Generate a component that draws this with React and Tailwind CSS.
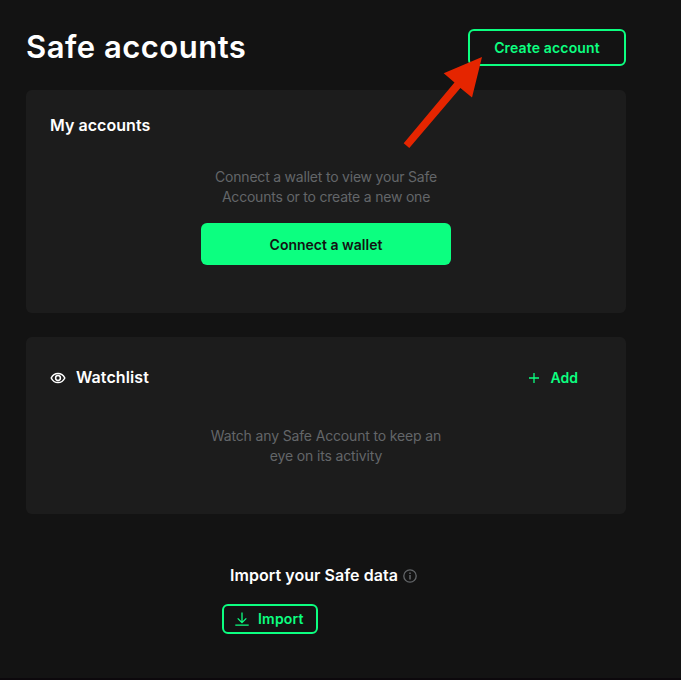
function EyeIcon() {
  return (
    <svg className="mt-[2px] h-4 w-4 shrink-0" viewBox="0 0 16 16" fill="none" stroke="#fff" strokeWidth="1.5">
      <path d="M1.2 8C2.6 5.1 5 3.4 8 3.4S13.4 5.1 14.8 8C13.4 10.9 11 12.6 8 12.6S2.6 10.9 1.2 8Z" strokeLinejoin="round" />
      <circle cx="8" cy="8" r="2.4" />
    </svg>
  );
}

function PlusIcon() {
  return (
    <svg className="h-[10px] w-[10px]" viewBox="0 0 10 10" stroke="#0cff80" strokeWidth="1.3">
      <path d="M5 0V10M0 5H10" />
    </svg>
  );
}

function DownloadIcon() {
  return (
    <svg className="h-[14px] w-[14px]" viewBox="0 0 14 14" fill="none" stroke="#0cff80" strokeWidth="1.3">
      <path d="M7 0.5V10.5M2.7 6.4L7 10.7L11.3 6.4M0.3 13.2H13.7" />
    </svg>
  );
}

function InfoIcon() {
  return (
    <svg className="mt-[2px] h-[14px] w-[14px]" viewBox="0 0 14 14" fill="none" stroke="#636669" strokeWidth="1.3">
      <circle cx="7" cy="7" r="6.2" />
      <path d="M7 6V10.5M7 3.4V4.9" strokeWidth="1.5" />
    </svg>
  );
}

export default function App() {
  return (
    <div className="relative h-[680px] w-[681px] overflow-hidden border-b-2 border-[#0c080c] bg-[#131313] pl-[26px] pr-[55px] pt-[28px] font-['Inter',sans-serif] text-white">
      <header className="flex h-[38px] items-end justify-between">
        <h1 className="whitespace-nowrap text-[31px] font-semibold leading-[38px] tracking-[0.5px]">Safe accounts</h1>
        <button className="h-[37px] w-[158px] rounded-[6px] border-2 border-[#0cff80] text-[14px] font-semibold leading-5 tracking-[0.15px] text-[#0cff80]">
          Create account
        </button>
      </header>

      <section className="mt-6 h-[223px] rounded-[6px] bg-[#1c1c1c] px-6 pt-[25px]">
        <h2 className="text-[16px] font-semibold leading-5 tracking-[0.05px]">My accounts</h2>
        <div className="mt-[32px] flex flex-col items-center">
          <p className="whitespace-nowrap text-center text-[14px] leading-5 tracking-[-0.21px] text-[#636669]">
            Connect a wallet to view your Safe
            <br />
            Accounts or to create a new one
          </p>
          <button className="mt-4 h-[42px] w-[250px] rounded-[6px] bg-[#0cff80] text-[14px] font-semibold text-[#121312]">
            Connect a wallet
          </button>
        </div>
      </section>

      <section className="mt-6 h-[177px] rounded-[6px] bg-[#1c1c1c] px-6 pt-[30px]">
        <div className="flex h-5 items-center">
          <EyeIcon />
          <h2 className="ml-[10px] text-[16px] font-semibold leading-5 tracking-[0.1px]">Watchlist</h2>
          <button className="ml-auto mr-[24px] mt-[2px] flex items-center gap-[12px] text-[14px] font-semibold leading-5 text-[#0cff80]">
            <PlusIcon />
            <span>Add</span>
          </button>
        </div>
        <p className="mt-[39px] whitespace-nowrap text-center text-[14px] leading-5 tracking-[-0.15px] text-[#636669]">
          Watch any Safe Account to keep an
          <br />
          eye on its activity
        </p>
      </section>

      <section className="ml-[196px] mt-[51px]">
        <div className="flex h-5 items-center gap-[5px] pl-2">
          <h2 className="whitespace-nowrap text-[16px] font-semibold leading-5 tracking-[0.05px]">Import your Safe data</h2>
          <InfoIcon />
        </div>
        <button className="mt-[19px] flex h-[30px] w-[96px] items-center gap-[9px] rounded-[6px] border-2 border-[#0cff80] pl-[11px] text-[14px] font-semibold tracking-[0.2px] text-[#0cff80]">
          <DownloadIcon />
          <span className="-mt-px">Import</span>
        </button>
      </section>

      <svg className="absolute left-[400px] top-[54px] h-[96px] w-[86px]" viewBox="400 54 86 96" fill="#e52500">
        <path d="M482 57L443.7 73.3L454.5 82.5L403.7 143.3L409.3 148L460.4 88L472 97.5Z" />
      </svg>
    </div>
  );
}
